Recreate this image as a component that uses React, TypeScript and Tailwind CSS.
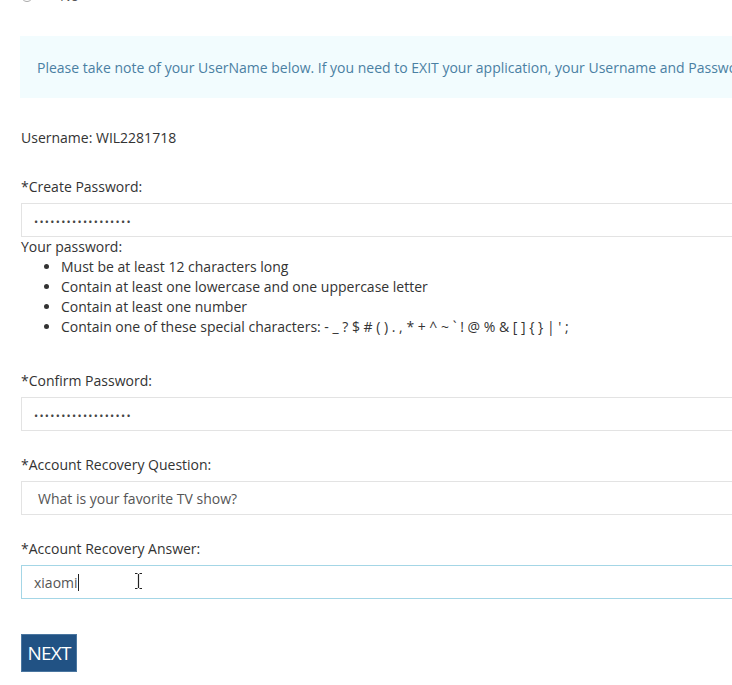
import { ReactNode } from "react";

type FieldProps = {
    label: string,
    children: ReactNode,
    focused?: boolean
}

/** ラベル付きの入力欄 */
function Field({ label, children, focused }: FieldProps) {
    return (
        <div className="flex flex-col">
            <p className="h-[20px] leading-[20px] mb-[6px]">{label}</p>
            <div
                className={
                    focused
                        ? "relative h-[34px] w-[760px] border border-[#a4d6e6] bg-white flex items-center"
                        : "relative h-[34px] w-[760px] border border-[#e3e3e3] bg-white flex items-center"
                }>
                {children}
            </div>
        </div>
    )
}

function Dots() {
    return (
        <span className="pl-[12px] pt-[2px] text-[#444] text-[11px] tracking-[1.3px] leading-none">
            {"••••••••••••••••••"}
        </span>
    )
}

const rules = [
    "Must be at least 12 characters long",
    "Contain at least one lowercase and one uppercase letter",
    "Contain at least one number",
    "Contain one of these special characters: - _ ? $ # ( ) . , * + ^ ~ ` ! @ % & [ ] { } | ' ;",
]

export default function App() {
    return (
        <div
            className="h-[685px] w-[732px] overflow-hidden bg-white text-[#333] text-[14px]"
            style={{ fontFamily: '"Open Sans", "Liberation Sans", sans-serif' }}>

            {/* 前の質問の選択肢（上が切れている） */}
            <div className="-mt-[15px] ml-[21px] flex items-center gap-[27px] text-[#555]">
                <span className="h-[12px] w-[12px] rounded-full border border-[#aaa]" />
                <span>No</span>
            </div>

            <div className="ml-[20px] mt-[30px] w-[760px] h-[62px] bg-[#f2fcfe] flex items-center pl-[17px] text-[#4a80a3] whitespace-nowrap">
                Please take note of your UserName below. If you need to EXIT your application, your Username and Password will be required
            </div>

            <div className="ml-[21px] flex flex-col">
                <p className="mt-[30px] h-[20px] leading-[20px]">Username: WIL2281718</p>

                <div className="mt-[29px]">
                    <Field label="*Create Password:">
                        <Dots />
                    </Field>
                </div>

                <p className="h-[20px] leading-[20px]">Your password:</p>
                <ul className="pl-[24px] list-disc marker:text-[#333]">
                    {rules.map(rule => (
                        <li key={rule} className="ml-[16px] h-[20px] leading-[20px] whitespace-nowrap">{rule}</li>
                    ))}
                </ul>

                <div className="mt-[34px]">
                    <Field label="*Confirm Password:">
                        <Dots />
                    </Field>
                </div>

                <div className="mt-[24px]">
                    <Field label="*Account Recovery Question:">
                        <span className="pl-[16px] text-[#555]">What is your favorite TV show?</span>
                    </Field>
                </div>

                <div className="mt-[24px]">
                    <Field label="*Account Recovery Answer:" focused>
                        <span className="pl-[12px] text-[#555]">xiaomi</span>
                        <span className="h-[17px] w-px bg-[#222]" />
                        {/* マウスカーソル */}
                        <svg className="absolute left-[112px] top-[6px]" width="9" height="18" viewBox="0 0 9 18">
                            <path d="M1 1.5h2.5M5.5 1.5H8M4.5 2v14M1 16.5h2.5M5.5 16.5H8" stroke="#222" strokeWidth="1.2" fill="none" />
                        </svg>
                    </Field>
                </div>

                <button className="mt-[35px] h-[38px] w-[56px] bg-[#215284] border border-[#4a76a0] text-white text-[19px] tracking-[-0.8px] flex items-center justify-center">
                    NEXT
                </button>
            </div>
        </div>
    )
}
